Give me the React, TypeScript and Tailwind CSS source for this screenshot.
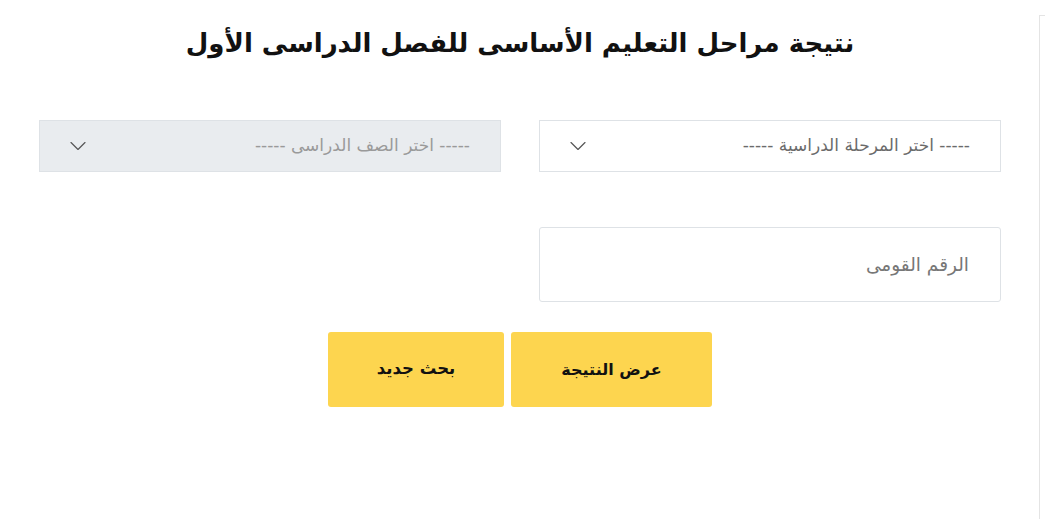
import { ChevronDown } from "lucide-react"

const font = { fontFamily: '"DejaVu Sans", "Noto Sans", sans-serif' }

function SelectBox({ label, disabled }: { label: string; disabled?: boolean }) {
  return (
    <div
      className={
        "flex h-[52px] items-center justify-between border border-[#dee2e6] pr-[30px] pl-[24px] " +
        (disabled ? "bg-[#e9ecef] text-[#9a9a9a]" : "bg-white text-[#6b6b6b]")
      }
    >
      <span className="text-[17px]">{label}</span>
      <ChevronDown className="h-7 w-7 text-[#555]" strokeWidth={1} />
    </div>
  )
}

export default function App() {
  return (
    <div dir="rtl" className="flex h-[519px] w-full bg-white" style={font}>
      <div className="mt-[15px] w-[6px] border-t border-l border-[#e4e4e4]" />
      <div className="flex-1 pr-[38px] pl-[39px]">
        <h1 className="mt-[23px] text-center text-[26px] leading-[40px] font-bold text-[#111]">
          نتيجة مراحل التعليم الأساسى للفصل الدراسى الأول
        </h1>

        <div className="mt-[57px] grid grid-cols-2 gap-[38px]">
          <SelectBox label="----- اختر المرحلة الدراسية -----" />
          <SelectBox label="----- اختر الصف الدراسى -----" disabled />
        </div>

        <div className="mt-[55px] grid grid-cols-2 gap-[38px]">
          <div className="flex h-[75px] items-center rounded-[3px] border border-[#dee2e6] pr-[31px] text-[18.5px] text-[#777]">
            الرقم القومى
          </div>
        </div>

        <div className="mt-[30px] flex justify-center gap-[7px]">
          <button className="h-[75px] w-[201px] rounded-[3px] bg-[#fdd54f] text-[16px] font-bold text-[#111]">
            عرض النتيجة
          </button>
          <button className="h-[75px] w-[176px] rounded-[3px] bg-[#fdd54f] text-[16.5px] font-bold text-[#111]">
            بحث جديد
          </button>
        </div>
      </div>
    </div>
  )
}
